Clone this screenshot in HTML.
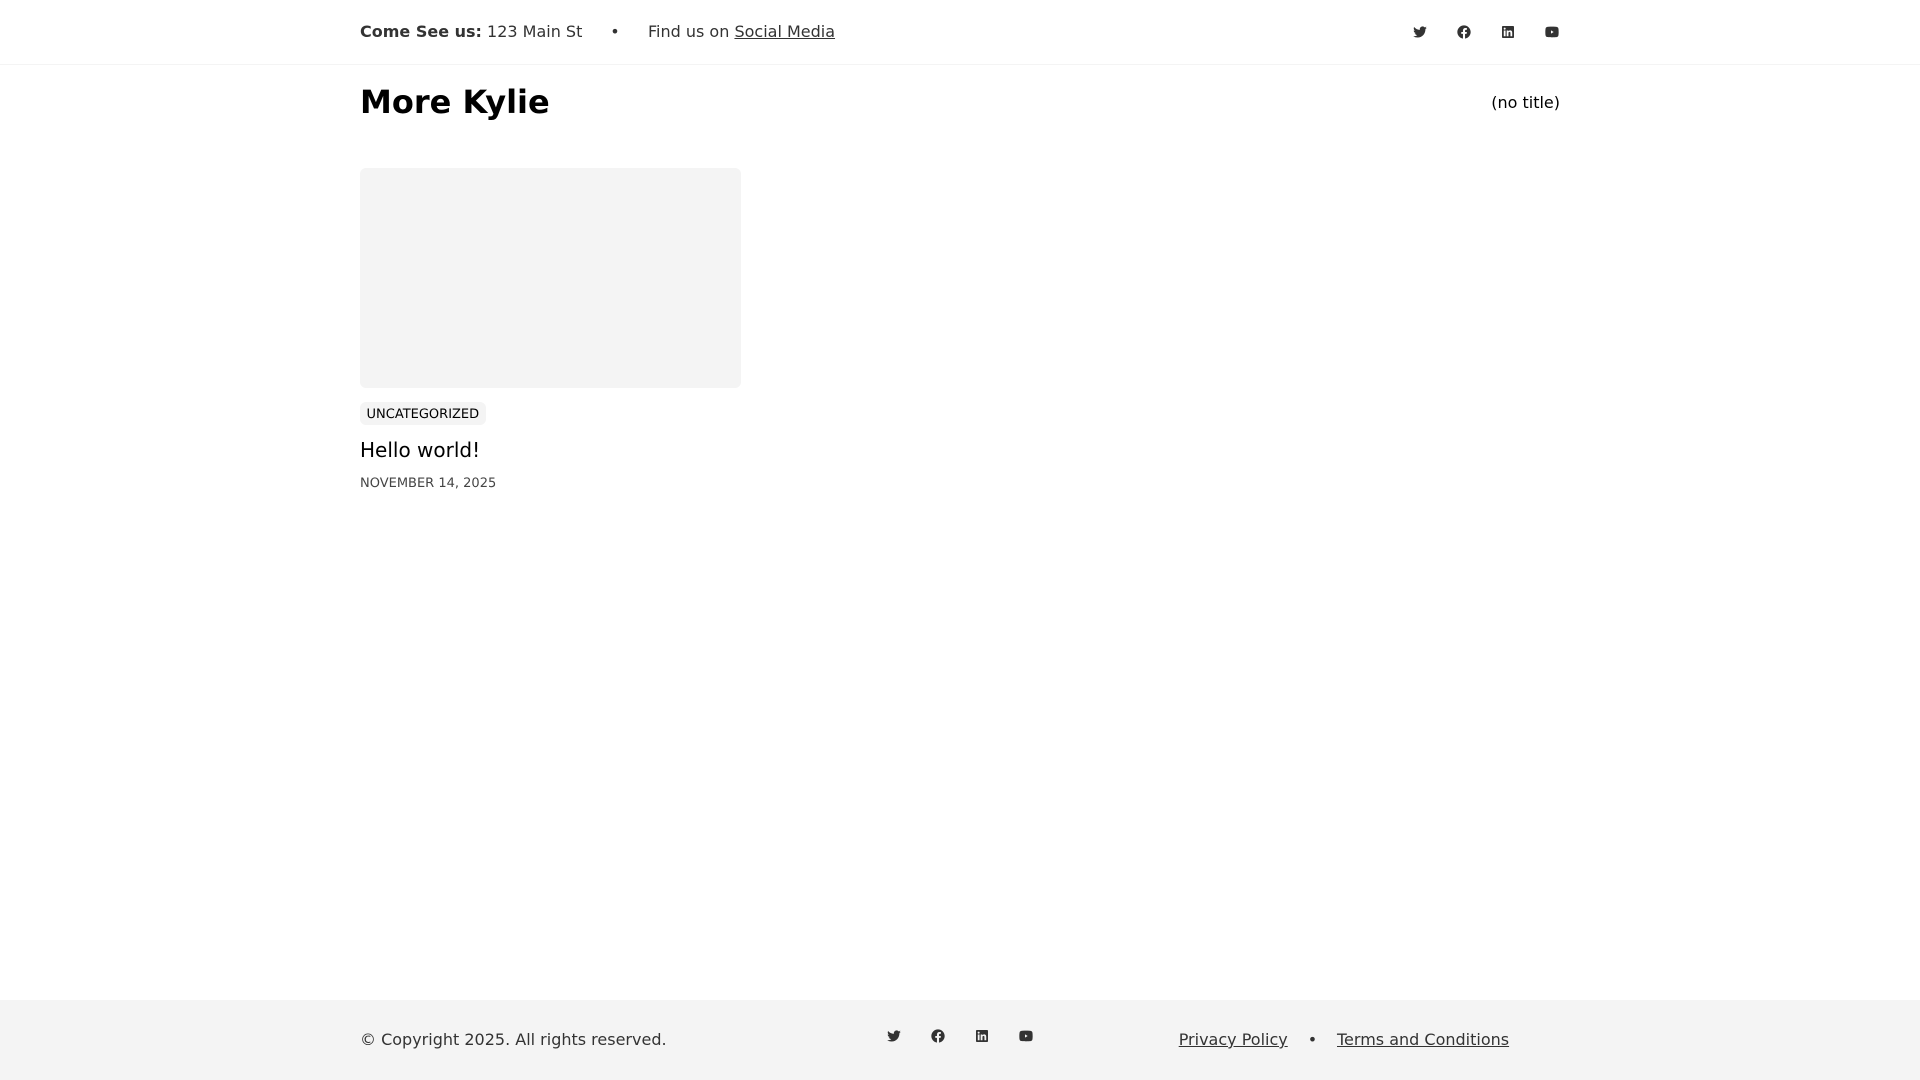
<!DOCTYPE html>
<html lang="en">
<head>
<meta charset="utf-8">
<title>More Kylie</title>
<style>
html,body{margin:0;padding:0;background:#fff;}
body{width:1920px;height:1080px;position:relative;overflow:hidden;font-family:"DejaVu Sans","Liberation Sans",sans-serif;font-size:16px;color:#333;}
.a{position:absolute;white-space:nowrap;line-height:24px;}
a{color:inherit;text-decoration:underline;}
svg.i{position:absolute;width:16px;height:16px;fill:#333;}
</style>
</head>
<body>
<svg width="0" height="0" style="position:absolute">
<symbol id="tw" viewBox="0 0 24 24"><path d="M22.162 5.656a8.384 8.384 0 0 1-2.402.658A4.196 4.196 0 0 0 21.6 4c-.82.488-1.719.83-2.656 1.015a4.182 4.182 0 0 0-7.126 3.814 11.874 11.874 0 0 1-8.62-4.37 4.168 4.168 0 0 0-.566 2.103c0 1.45.738 2.731 1.86 3.481a4.168 4.168 0 0 1-1.894-.523v.052a4.185 4.185 0 0 0 3.355 4.101 4.21 4.21 0 0 1-1.89.072A4.185 4.185 0 0 0 7.97 16.65a8.394 8.394 0 0 1-6.191 1.732 11.83 11.83 0 0 0 6.41 1.88c7.693 0 11.9-6.373 11.9-11.9 0-.18-.005-.362-.013-.54a8.496 8.496 0 0 0 2.087-2.165z"/></symbol>
<symbol id="fb" viewBox="0 0 24 24"><path d="M12 2C6.477 2 2 6.477 2 12c0 4.991 3.657 9.128 8.438 9.879V14.89h-2.54V12h2.54V9.797c0-2.506 1.492-3.89 3.777-3.89 1.094 0 2.238.195 2.238.195v2.46h-1.26c-1.243 0-1.63.771-1.63 1.562V12h2.773l-.443 2.89h-2.33v6.989C18.343 21.129 22 16.99 22 12c0-5.523-4.477-10-10-10z"/></symbol>
<symbol id="li" viewBox="0 0 24 24"><path d="M18.336 18.339h-2.665v-4.177c0-.996-.02-2.278-1.39-2.278-1.389 0-1.601 1.084-1.601 2.205v4.25h-2.666V9.75h2.56v1.17h.035c.358-.674 1.228-1.387 2.528-1.387 2.7 0 3.2 1.778 3.2 4.091v4.715zM7.004 8.575a1.546 1.546 0 0 1-1.548-1.549 1.548 1.548 0 1 1 1.547 1.549zm1.336 9.764H5.667V9.75H8.34v8.589zM19.67 3H4.33C3.594 3 3 3.58 3 4.297v15.406C3 20.42 3.594 21 4.33 21h15.339C20.4 21 21 20.42 21 19.703V4.297C21 3.58 20.4 3 19.67 3z"/></symbol>
<symbol id="yt" viewBox="0 0 24 24"><path fill-rule="evenodd" d="M21.543 6.498C22 8.28 22 12 22 12s0 3.72-.457 5.502c-.254.985-.997 1.76-1.938 2.022C17.896 20 12 20 12 20s-5.893 0-7.605-.476c-.945-.266-1.687-1.04-1.938-2.022C2 15.72 2 12 2 12s0-3.72.457-5.502c.254-.985.997-1.76 1.938-2.022C6.107 4 12 4 12 4s5.896 0 7.605.476c.945.266 1.687 1.04 1.938 2.022zM10.5 14.5l4-2.5-4-2.5v5z"/></symbol>
</svg>

<div style="position:absolute;left:0;top:64px;width:1920px;height:1px;background:#f4f4f4"></div>

<div class="a" style="left:360px;top:20px"><b>Come See us:</b> 123 Main St</div>
<div class="a" style="left:615px;top:20px;transform:translateX(-50%)">•</div>
<div class="a" style="left:648px;top:20px">Find us on <a>Social Media</a></div>

<svg class="i" style="left:1412px;top:24px"><use href="#tw"/></svg>
<svg class="i" style="left:1456px;top:24px"><use href="#fb"/></svg>
<svg class="i" style="left:1500px;top:24px"><use href="#li"/></svg>
<svg class="i" style="left:1544px;top:24px"><use href="#yt"/></svg>

<div class="a" style="left:360px;top:80px;font-size:32px;line-height:44px;font-weight:700;color:#000">More Kylie</div>
<div class="a" style="right:360px;top:91px;color:#000">(no title)</div>

<div style="position:absolute;left:360px;top:168px;width:381px;height:220px;background:#f4f4f4;border-radius:6px"></div>

<div class="a" style="left:360px;top:402px;height:23px;line-height:25px;padding:0 6.5px;background:#f4f4f4;border-radius:6px;font-size:13px;color:#000;text-rendering:geometricPrecision">UNCATEGORIZED</div>
<div class="a" style="left:360px;top:436px;font-size:20px;line-height:28px;color:#000">Hello world!</div>
<div class="a" style="left:360px;top:474px;font-size:13px;line-height:20px;color:#444;text-rendering:geometricPrecision">NOVEMBER 14, 2025</div>

<div style="position:absolute;left:0;top:1000px;width:1920px;height:80px;background:#f4f4f4"></div>
<div class="a" style="left:360px;top:1028px">© Copyright 2025. All rights reserved.</div>

<svg class="i" style="left:886px;top:1028px"><use href="#tw"/></svg>
<svg class="i" style="left:930px;top:1028px"><use href="#fb"/></svg>
<svg class="i" style="left:974px;top:1028px"><use href="#li"/></svg>
<svg class="i" style="left:1018px;top:1028px"><use href="#yt"/></svg>

<div class="a" style="left:1178.7px;top:1028px"><a>Privacy Policy</a></div>
<div class="a" style="left:1312.5px;top:1028px;transform:translateX(-50%)">•</div>
<div class="a" style="left:1337px;top:1028px"><a>Terms and Conditions</a></div>
</body>
</html>
